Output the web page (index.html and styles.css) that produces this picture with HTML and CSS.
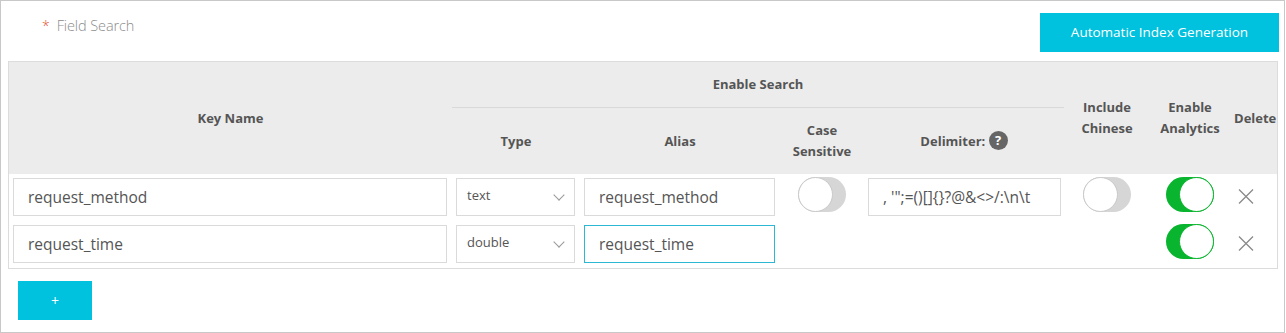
FILE: index.html
```html
<!DOCTYPE html>
<html>
	<head>
		<meta charset="UTF-8">
		<title>Field Search</title>
		<link rel="stylesheet" href="styles.css">
	</head>

	<body>
		<div class="page">
			<div class="top">
				<div class="label"><span class="req">*</span>Field Search</div>
				<a class="btn btn-auto" href="javascript:;">Automatic Index Generation</a>
			</div>

			<table class="fields">
				<colgroup>
					<col style="width:443px">
					<col style="width:128px">
					<col style="width:200px">
					<col style="width:84px">
					<col style="width:200px">
					<col style="width:86px">
					<col style="width:80px">
					<col style="width:47px">
				</colgroup>
				<thead>
					<tr class="h1">
						<th rowspan="2">Key Name</th>
						<th colspan="4" class="group">Enable Search</th>
						<th rowspan="2">Include<br>Chinese</th>
						<th rowspan="2">Enable<br>Analytics</th>
						<th rowspan="2" class="del">Delete</th>
					</tr>
					<tr class="h2">
						<th>Type</th>
						<th>Alias</th>
						<th>Case<br>Sensitive</th>
						<th>Delimiter: <span class="help">?</span></th>
					</tr>
				</thead>
				<tbody>
					<tr>
						<td><div class="ipt">request_method</div></td>
						<td><div class="sel">text<i class="arrow"></i></div></td>
						<td><div class="ipt">request_method</div></td>
						<td class="c"><span class="switch"></span></td>
						<td class="delim"><div class="ipt">, '";=()[]{}?@&amp;&lt;&gt;/:\n\t</div></td>
						<td class="c"><span class="switch"></span></td>
						<td class="c"><span class="switch on"></span></td>
						<td class="c-del"><svg class="x" width="16" height="15" viewBox="0 0 16 15"><path d="M1 0.5L15 14.5M15 0.5L1 14.5" stroke="#8a8a8a" stroke-width="1.3" fill="none"/></svg></td>
					</tr>
					<tr>
						<td><div class="ipt">request_time</div></td>
						<td><div class="sel">double<i class="arrow"></i></div></td>
						<td><div class="ipt focus">request_time</div></td>
						<td></td>
						<td></td>
						<td></td>
						<td class="c"><span class="switch on"></span></td>
						<td class="c-del"><svg class="x" width="16" height="15" viewBox="0 0 16 15"><path d="M1 0.5L15 14.5M15 0.5L1 14.5" stroke="#8a8a8a" stroke-width="1.3" fill="none"/></svg></td>
					</tr>
				</tbody>
			</table>

			<a class="btn btn-add" href="javascript:;">+</a>
		</div>
	</body>

</html>
```

FILE: styles.css
```css
body,
p {
	margin: 0;
	padding: 0;
}

body,
div,
td,
th {
	font-family: "Open Sans", "Noto Sans", sans-serif;
	color: #555;
}

a {
	text-decoration: none;
}

.page {
	width: 1285px;
	height: 333px;
	box-sizing: border-box;
	border: 1px solid #c8c8c8;
	padding: 12px 5px 0 7px;
}

.top {
	display: flex;
	justify-content: space-between;
	align-items: flex-start;
	height: 39px;
	margin-bottom: 9px;
}

.label {
	margin: 3px 0 0 34px;
	font-size: 14.5px;
	font-weight: 300;
	color: #8c8c8c;
	letter-spacing: -0.1px;
}

.label .req {
	color: #e4502d;
	margin-right: 7px;
	font-size: 14px;
}

.btn {
	display: block;
	background: #00c1de;
	color: #fff;
	text-align: center;
	font-size: 13.5px;
	line-height: 39px;
	height: 39px;
}

.btn-auto {
	width: 239px;
}

.btn-add {
	width: 74px;
	margin: 12px 0 0 10px;
	font-size: 14px;
}

/* table */

.fields {
	width: 1270px;
	table-layout: fixed;
	border-collapse: separate;
	border-spacing: 0;
	border: 1px solid #dcdcdc;
}

.fields thead {
	background: #ececec;
}

.fields th {
	padding: 0;
	font-size: 13px;
	font-weight: 700;
	color: #555;
	line-height: 21px;
	text-align: center;
	vertical-align: middle;
}

.fields .h1 {
	height: 46px;
}

.fields .h1 th.group {
	border-bottom: 1px solid #d9d9d9;
}

.fields .h2 {
	height: 66px;
}

.fields th.del {
	text-align: left;
	padding-left: 4px;
	white-space: nowrap;
	overflow: visible;
}

.help {
	display: inline-block;
	width: 19px;
	height: 19px;
	border-radius: 50%;
	background: #666;
	color: #fff;
	font-size: 13px;
	font-weight: 700;
	line-height: 19px;
	text-align: center;
	vertical-align: middle;
	margin-top: -3px;
}

.fields td {
	padding: 4px 5px 5px 4px;
	vertical-align: top;
	line-height: 0;
}

.fields td.delim {
	padding-right: 3px;
}

.ipt {
	height: 38px;
	box-sizing: border-box;
	border: 1px solid #dadada;
	padding: 0 14px;
	font-size: 15.5px;
	line-height: 36px;
	color: #555;
	white-space: nowrap;
	overflow: hidden;
}

.ipt.focus {
	border-color: #2cb8d2;
}

.sel {
	position: relative;
	height: 38px;
	box-sizing: border-box;
	border: 1px solid #dadada;
	padding: 0 10px;
	font-size: 13px;
	line-height: 32px;
	color: #555;
}

.sel .arrow {
	position: absolute;
	right: 11px;
	top: 12px;
	width: 7px;
	height: 7px;
	border-right: 1px solid #999;
	border-bottom: 1px solid #999;
	transform: rotate(45deg);
}

.fields td.c {
	padding-left: 0;
	padding-right: 0;
}

.switch {
	display: block;
	position: relative;
	width: 48px;
	height: 35px;
	margin: -1px auto 0;
	border-radius: 18px;
	background: #d6d6d6;
	box-sizing: border-box;
}

.switch:after {
	content: "";
	position: absolute;
	left: 0;
	top: 0;
	width: 35px;
	height: 35px;
	box-sizing: border-box;
	border-radius: 50%;
	background: #fff;
	border: 1px solid #c9c9c9;
}

.switch.on {
	background: #09b42e;
}

.switch.on:after {
	left: auto;
	right: 0;
	border-color: #09b42e;
}

.fields td.c-del {
	padding: 15px 0 0 8px;
}

.x {
	display: block;
}
```
